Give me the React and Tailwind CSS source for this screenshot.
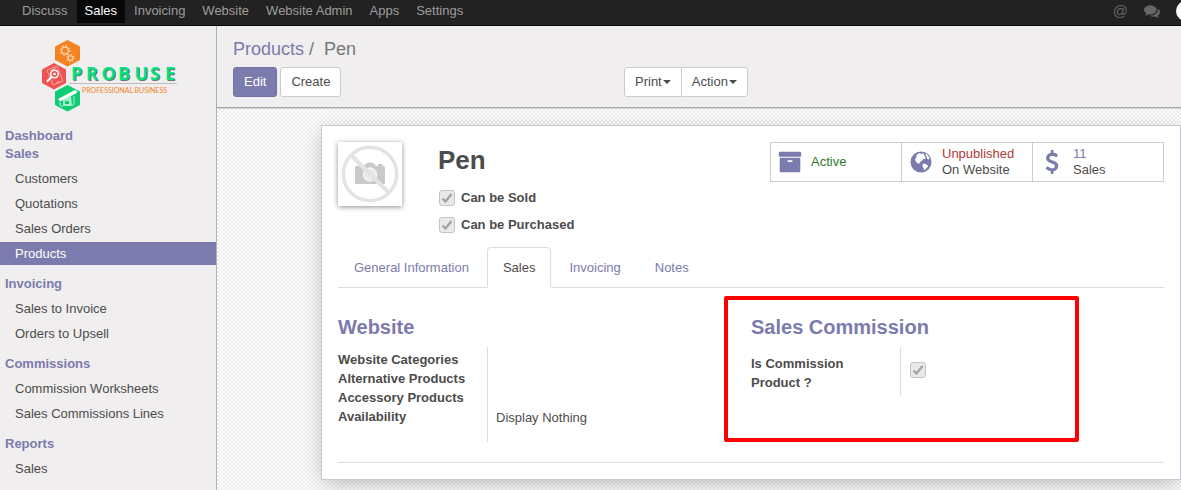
import React from "react";

const NAV_ITEMS = ["Discuss", "Sales", "Invoicing", "Website", "Website Admin", "Apps", "Settings"];

const MENU = [
  { title: "Dashboard", items: [] },
  { title: "Sales", items: ["Customers", "Quotations", "Sales Orders", "Products"] },
  { title: "Invoicing", items: ["Sales to Invoice", "Orders to Upsell"] },
  { title: "Commissions", items: ["Commission Worksheets", "Sales Commissions Lines"] },
  { title: "Reports", items: ["Sales"] },
];

const TABS = ["General Information", "Sales", "Invoicing", "Notes"];

function CommentsIcon() {
  return (
    <svg viewBox="0 0 1792 1792" className="size-4" fill="currentColor" aria-hidden="true">
      <path d="M1408 768q0 139-94 257t-256.5 186.5-353.5 68.5q-86 0-176-16-124 88-278 128-36 9-86 16h-3q-11 0-20.5-8t-11.5-21q-1-3-1-6.5t.5-6.5 2-6l2.5-5 3.5-5.5 4-5 4.5-5 4-4.5q5-6 23-25t26-29.5 22.5-29 25-38.5 20.5-44q-124-72-195-177t-71-224q0-139 94-257t256.5-186.5 353.5-68.5 353.5 68.5 256.5 186.5 94 257zm384 256q0 120-71 224.5t-195 176.5q10 24 20.5 44t25 38.5 22.5 29 26 29.5 23 25q1 1 4 4.5t4.5 5 4 5 3.5 5.5l2.5 5 2 6 .5 6.5-1 6.5q-3 14-13 22t-22 7q-50-7-86-16-154-40-278-128-90 16-176 16-271 0-472-132 58 4 88 4 161 0 309-45t264-129q125-92 192-212t67-254q0-77-23-152 129 71 204 178t75 230z" />
    </svg>
  );
}

function ArchiveIcon() {
  return (
    <svg viewBox="0 0 1792 1792" className="size-6" fill="currentColor" aria-hidden="true">
      <path d="M1088 832q0-26-19-45t-45-19h-256q-26 0-45 19t-19 45 19 45 45 19h256q26 0 45-19t19-45zm576-192v960q0 26-19 45t-45 19h-1408q-26 0-45-19t-19-45v-960q0-26 19-45t45-19h1408q26 0 45 19t19 45zm64-448v256q0 26-19 45t-45 19h-1536q-26 0-45-19t-19-45v-256q0-26 19-45t45-19h1536q26 0 45 19t19 45z" />
    </svg>
  );
}

function GlobeIcon() {
  return (
    <svg viewBox="0 0 24 24" className="size-6" aria-hidden="true">
      <circle cx="12" cy="12" r="10.500" fill="currentColor" />
      <path
        d="M7.500 5 9.500 3.600l1.800-.4.6 1 1.700-.9 1.400.3-.2 1.500 1.300.8-.5 1.200 1.200.6-.8 1.200-1.800.2-.9 1.300-1.500.8-.6 1.300-1 .4.2 1.200-1.300-.6-1.600-.9-1-1.900-.3-2 1.200-1.300z"
        fill="#fff"
      />
      <path d="m16.800 3.600 1.900 1.600 1.500 2.300.4 1.600-1.600.5-1.200-1.200.3-1.500-1.400-1z" fill="#fff" />
      <path d="m13.600 14.200 1.400-.8 1.900.5 1 1 1.300.5-.3 1.300-1.300 1.300-1.400 1.400-1.200.5-.4-1.800-1-1.300z" fill="#fff" />
    </svg>
  );
}

function DollarIcon() {
  return (
    <svg viewBox="0 0 1024 1792" className="h-6 w-4" fill="currentColor" aria-hidden="true">
      <path d="M978 1185q0 153-99.5 263.5t-258.5 136.5v175q0 14-9 23t-23 9h-135q-13 0-22.5-9.5t-9.5-22.5v-175q-66-9-127.5-31t-101.5-44.5-74-48-46.5-37.5-17.5-18q-17-21-2-41l103-135q7-10 23-12 15-2 24 9l2 2q113 99 243 125 37 8 74 8 81 0 142.5-43t61.5-122q0-28-15-53t-33.5-42-58.5-37.5-66-32-80-32.5q-39-16-61.5-25t-61.5-26.5-62.5-31-56.5-35.5-53.5-42.5-43.5-49-35.5-58-21-66.5-8.5-78q0-138 98-242t255-134v-180q0-13 9.5-22.5t22.5-9.5h135q14 0 23 9t9 23v176q57 6 110.5 23t87 33.5 63.5 37.5 39 29 15 14q17 18 5 38l-81 146q-8 15-23 16-14 3-27-7-3-3-14.5-12t-39-26.5-58.5-32-74.5-26-85.5-11.500q-95 0-155 43t-60 111q0 26 8.5 48t29.5 41.5 39.5 33 56 31 60.5 27 70 27.5q53 20 81 31.5t76 35 75.5 42.5 62 50 53 63.5 31.5 76.5 13 94z" />
    </svg>
  );
}

function Logo() {
  return (
    <svg viewBox="0 0 136 72" className="h-[72px] w-[136px]" role="img" aria-label="Probuse Professional Business">
      <path d="M25.500 0 38 6.500v13.500L25.500 26.500 13 20V6.500z" fill="#f58220" />
      <g fill="none" stroke="#ffd9b3">
        <circle cx="23" cy="10.500" r="3.300" strokeWidth="1.200" />
        <circle cx="23" cy="10.500" r="4.800" strokeWidth="1.300" strokeDasharray="1.600 2.150" />
        <circle cx="28.500" cy="18" r="2.300" strokeWidth="1.100" />
        <circle cx="28.500" cy="18" r="3.700" strokeWidth="1.200" strokeDasharray="1.300 1.600" />
      </g>
      <path d="m12 23 12 6.500V43l-12 6.500L0 43V29.500z" fill="#ef5350" />
      <g fill="none" stroke="#f9b3b1" strokeWidth=".8">
        <path d="m5 30 10-4 6 15-10 4zM8 31l6-3M14 43l4-2" />
      </g>
      <circle cx="12.500" cy="34" r="3.800" fill="#ef5350" stroke="#fff" strokeWidth="1.600" />
      <path d="m9.500 37-4 4" stroke="#fff" strokeWidth="2.200" strokeLinecap="round" />
      <circle cx="12.500" cy="34" r="1.300" fill="#fff" />
      <path d="M25.500 45 38 51.500V65l-12.500 6.500L13 65V51.500z" fill="#0dcc74" />
      <path d="m16 59 17-9 2.500 1.500-1.500 2-16 8z" fill="#fff" />
      <path d="m21 60 8-4 1 10h-9z" fill="#a9efcd" />
      <path d="M23 61h4v3h-4z" fill="#0dcc74" />
      <path d="M18 62v3l3 2M32 56v8l-2 2" fill="none" stroke="#a9efcd" />
      <g fontFamily="'Open Sans', sans-serif" fontWeight="700" fontSize="18">
        <text x="30 45 60.500 77 93.500 109 124" y="40.500" fill="#667a70" aria-hidden="true">PROBUSE</text>
        <text x="29 44 59.500 76 92.500 108 123" y="39.500" fill="#08e07f">PROBUSE</text>
      </g>
      <path d="M27 43.500h108" stroke="#bdbdbd" />
      <text x="40" y="53" fontFamily="Lato, sans-serif" fontSize="7" fill="#f58220">PROFESSIONAL BUSINESS</text>
    </svg>
  );
}

function Check({ id }) {
  return (
    <span className="grid size-4 shrink-0">
      <input
        id={id}
        type="checkbox"
        defaultChecked
        disabled
        className="col-start-1 row-start-1 size-4 appearance-none rounded-[3px] border border-[#c4c4c4] bg-[#e9e9e9]"
      />
      <svg viewBox="0 0 16 16" className="pointer-events-none col-start-1 row-start-1 size-4" aria-hidden="true">
        <path d="M3.500 8.500 6.500 11.500 12.500 4" fill="none" stroke="#a3a3a3" strokeWidth="2.300" />
      </svg>
    </span>
  );
}

function Placeholder() {
  return (
    <svg viewBox="0 0 64 64" className="size-16 shrink-0 bg-white shadow-[0_1px_5px_rgba(0,0,0,0.45)]" role="img" aria-label="No picture">
      <path
        d="M18.500 24H26q1.500-3.500 6-3.500t6 3.500h2v-2h4.500v2h1q1.500 0 1.500 1.500v15q0 1.500-1.500 1.500h-27Q17 42 17 40.500v-15Q17 24 18.500 24z"
        fill="#c9c9c9"
      />
      <circle cx="32" cy="32.500" r="7.200" fill="#f4f4f4" />
      <circle cx="32" cy="32.500" r="5.500" fill="#e9e9e9" />
      <circle cx="32" cy="32" r="26.700" fill="none" stroke="#e3e3e3" strokeWidth="3.500" />
      <path d="m13 13 38 38" stroke="#e3e3e3" strokeWidth="4" />
    </svg>
  );
}

function StatButton({ icon, children }) {
  return (
    <button type="button" className="flex w-[132px] items-center border border-[#ccc] bg-white pl-[6px] text-left not-first:-ml-px">
      <span className="flex w-[26px] justify-center text-[#7c7bad]">{icon}</span>
      <span className="ml-2 flex flex-col leading-4">{children}</span>
    </button>
  );
}

function MenuButton({ children, className }) {
  return (
    <button type="button" className={`flex h-[30px] items-center gap-px border border-[#ccc] bg-white px-[10px] ${className}`}>
      {children}
      <svg viewBox="0 0 8 4" className="h-1 w-2" fill="currentColor" aria-hidden="true">
        <path d="M0 0h8L4 4z" />
      </svg>
    </button>
  );
}

export default function App() {
  return (
    <div className="flex min-h-screen flex-col overflow-hidden bg-white font-['Liberation_Sans',Arial,sans-serif] text-[13px] text-[#4c4c4c]">
      <nav className="flex h-[26px] items-start overflow-hidden border-b border-[#080808] bg-[#222] pl-[14px]">
        <div className="flex gap-px">
          {NAV_ITEMS.map((name) => (
            <a
              key={name}
              href="#"
              className={`h-[23px] px-2 leading-[22px] ${name === "Sales" ? "bg-[#080808] text-white" : "text-[#9d9d9d]"}`}
            >
              {name}
            </a>
          ))}
        </div>
        <div className="ml-auto flex h-[22px] items-center text-[#666]">
          <button type="button" aria-label="Mentions" className="text-[15px] leading-5">@</button>
          <button type="button" aria-label="Conversations" className="ml-4">
            <CommentsIcon />
          </button>
          <span className="-mr-[15px] ml-4 size-5 rounded-full bg-white" />
        </div>
      </nav>

      <div className="flex flex-1">
        <aside className="w-[217px] shrink-0 border-r border-[#afafb6] bg-[#f0eeee]">
          <a href="#" className="flex h-[101px] pt-[14px] pl-[42px]">
            <Logo />
          </a>
          {MENU.map(({ title, items }, i) => (
            <section key={title} className={i > 1 ? "pt-[10px]" : ""}>
              <h2 className="pl-[5px] leading-[18px] font-bold text-[#7c7bad]">{title}</h2>
              {items.length > 0 && (
                <ul className="flex flex-col gap-[2px] pt-1">
                  {items.map((item) => (
                    <li key={item}>
                      <a
                        href="#"
                        className={`block pl-[15px] leading-[23px] ${item === "Products" ? "bg-[#7c7bad] text-white" : ""}`}
                      >
                        {item}
                      </a>
                    </li>
                  ))}
                </ul>
              )}
            </section>
          ))}
        </aside>

        <main className="flex min-w-0 flex-1 flex-col">
          <header className="border-b border-[#a9a8ab] bg-[#f0eeee] px-4 pt-[10px] pb-[10px]">
            <div className="pt-[1px] text-[18px] leading-6 text-[#777]">
              <a href="#" className="text-[#7c7bad]">Products</a>
              <span className="pr-[10px] pl-[5px]">/</span>
              <span>Pen</span>
            </div>
            <div className="flex pt-[6px]">
              <div className="flex w-[391px] gap-[3px]">
                <button type="button" className="h-[30px] rounded-[3px] border border-[#7270a4] bg-[#7c7bad] px-[10px] text-white">
                  Edit
                </button>
                <button type="button" className="h-[30px] rounded-[3px] border border-[#ccc] bg-white px-[10px]">
                  Create
                </button>
              </div>
              <div className="flex">
                <MenuButton className="rounded-l-[3px]">Print</MenuButton>
                <MenuButton className="-ml-px rounded-r-[3px]">Action</MenuButton>
              </div>
            </div>
          </header>

          <div className="flex-1 overflow-hidden border-t border-[#d2d2d2] bg-[repeating-conic-gradient(#ebebeb_0_25%,#ffffff_0_50%)] bg-size-[4px_4px] pt-4 pb-[10px] pl-[104px]">
            <div className="border border-[#c8c8d3] bg-white p-4 shadow-[0_5px_20px_-3px_rgba(0,0,0,0.27)]">
              <div className="flex items-start">
                <Placeholder />
                <div className="flex-1 pl-9">
                  <h1 className="pt-[2px] text-[26px] leading-8 font-bold">Pen</h1>
                  <div className="flex flex-col gap-[9px] pt-[13px]">
                    <label htmlFor="can-be-sold" className="flex items-center gap-[6px] pl-[1px] leading-[18px] font-bold">
                      <Check id="can-be-sold" />
                      Can be Sold
                    </label>
                    <label htmlFor="can-be-purchased" className="flex items-center gap-[6px] pl-[1px] leading-[18px] font-bold">
                      <Check id="can-be-purchased" />
                      Can be Purchased
                    </label>
                  </div>
                </div>
                <div className="flex h-10">
                  <StatButton icon={<ArchiveIcon />}>
                    <span className="text-[#2d7a2d]">Active</span>
                  </StatButton>
                  <StatButton icon={<GlobeIcon />}>
                    <span className="text-[#b03a3a]">Unpublished</span>
                    <span>On Website</span>
                  </StatButton>
                  <StatButton icon={<DollarIcon />}>
                    <span className="text-[#7c7bad]">11</span>
                    <span>Sales</span>
                  </StatButton>
                </div>
              </div>

              <div role="tablist" className="mt-[13px] flex gap-[2px] border-b border-[#ddd]">
                {TABS.map((tab) => (
                  <button
                    key={tab}
                    type="button"
                    role="tab"
                    aria-selected={tab === "Sales"}
                    className={`-mb-px h-[41px] rounded-t-[4px] border px-[15px] ${
                      tab === "Sales" ? "border-[#ddd] border-b-white bg-white" : "border-transparent text-[#7c7bad]"
                    }`}
                  >
                    {tab}
                  </button>
                ))}
              </div>

              <div className="grid grid-cols-2 border-b border-[#ddd] pt-[27px] pb-5">
                <section>
                  <h2 className="text-[20px] leading-6 font-bold text-[#7c7bad]">Website</h2>
                  <dl className="mt-2 flex">
                    <dt className="flex w-[150px] flex-col border-r border-[#ddd] pt-[3px] pb-4 leading-[19px] font-bold">
                      <span>Website Categories</span>
                      <span>Alternative Products</span>
                      <span>Accessory Products</span>
                      <span>Availability</span>
                    </dt>
                    <dd className="self-end pb-[15px] pl-2 leading-[18px]">Display Nothing</dd>
                  </dl>
                </section>
                <section className="relative">
                  <h2 className="text-[20px] leading-6 font-bold text-[#7c7bad]">Sales Commission</h2>
                  <div className="mt-2 flex">
                    <label htmlFor="is-commission" className="w-[150px] border-r border-[#ddd] pt-[7px] pb-1 leading-[19px] font-bold">
                      Is Commission
                      <br />
                      Product ?
                    </label>
                    <div className="pt-[15px] pl-[9px]">
                      <Check id="is-commission" />
                    </div>
                  </div>
                  <div className="pointer-events-none absolute -top-[19px] right-[85px] bottom-0 -left-[27px] rounded-[2px] border-4 border-[#ff0000]" />
                </section>
              </div>
            </div>
          </div>
        </main>
      </div>
    </div>
  );
}
